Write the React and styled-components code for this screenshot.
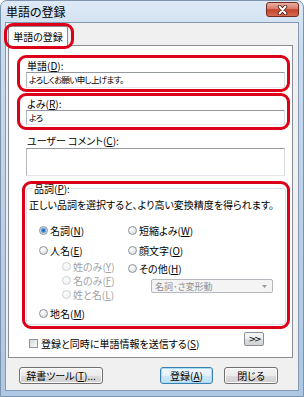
import styled, { createGlobalStyle } from "styled-components";

const GlobalStyle = createGlobalStyle`
  html, body { margin: 0; padding: 0; background: #fff; }
  body {
    font-family: "Noto Sans CJK JP", "Noto Sans", sans-serif;
    font-feature-settings: "palt";
    color: #000;
  }
  * { box-sizing: border-box; }
`;

const Window = styled.div`
  width: 304px;
  height: 397px;
  border: 1px solid #7d93ad;
  border-radius: 7px 7px 0 0;
  background: linear-gradient(180deg, #dde9f5 0%, #c9dbee 12%, #b9cfe7 60%, #aec7e2 100%);
  display: flex;
  flex-direction: column;
  overflow: hidden;
`;

const TitleBar = styled.div`
  height: 21px;
  display: flex;
  justify-content: space-between;
  align-items: flex-start;
  padding: 0 4px 0 5px;
`;

const Title = styled.div`
  font-size: 12px;
  line-height: 22px;
`;

const CloseButton = styled.div`
  margin-top: 1px;
  width: 33px;
  height: 15px;
  border: 1px solid #6e2a21;
  border-radius: 3px;
  background: linear-gradient(180deg, #eab0a4 0%, #d77a68 45%, #c2432c 52%, #d86a50 100%);
  display: flex;
  align-items: center;
  justify-content: center;
`;

const Client = styled.div`
  flex: 1;
  margin: 0 4px 5px 4px;
  border: 1px solid #8398b2;
  background: #f0f0f0;
  display: flex;
  flex-direction: column;
`;

const TabStrip = styled.div`
  display: flex;
  padding: 3px 0 0 2px;
`;

// a section of the dialog; $inset draws the red annotation frame around it
const Section = styled.div`
  position: relative;
  z-index: ${(p) => p.$z || 0};
  margin: ${(p) => p.$margin || "0"};
  &::after {
    content: "";
    display: ${(p) => (p.$inset ? "block" : "none")};
    position: absolute;
    top: ${(p) => p.$inset?.[0]}px;
    right: ${(p) => p.$inset?.[1]}px;
    bottom: ${(p) => p.$inset?.[2]}px;
    left: ${(p) => p.$inset?.[3]}px;
    border: 3px solid #dc0018;
    border-radius: 9px;
    pointer-events: none;
  }
`;

const Tab = styled.div`
  height: 20px;
  width: 60px;
  margin-bottom: -1px;
  border: 1px solid #898c95;
  border-bottom: none;
  border-radius: 2px 2px 0 0;
  background: #fff;
  font-size: 10px;
  line-height: 19px;
  text-align: center;
`;

const Panel = styled.div`
  margin: 0 5px 0 2px;
  height: 313px;
  border: 1px solid #898c95;
  background: #fff;
  display: flex;
  flex-direction: column;
`;

const FieldLabel = styled.div`
  height: 13px;
  font-size: 10px;
  line-height: 13px;
  padding-left: 1px;
`;

const TextBox = styled.div`
  height: ${(p) => p.$h}px;
  margin-top: ${(p) => p.$mt || 0}px;
  border: 1px solid;
  border-color: #9499a0 #dadde2 #e3e7ec #b3b7bd;
  background: #fff;
  font-size: 8.5px;
  letter-spacing: -0.7px;
  line-height: 13px;
  padding: 0 2px;
`;

const Group = styled.fieldset`
  margin: 0;
  height: 143px;
  padding: 0 0 0 2px;
  border: 1px solid #d5dfe5;
  border-radius: 3px;
  min-width: 0;
`;

const Legend = styled.legend`
  margin-left: 4px;
  padding: 0 1px;
  font-size: 10px;
  line-height: 13px;
`;

const Description = styled.div`
  margin-top: 3px;
  height: 14px;
  font-size: 10px;
  line-height: 14px;
  white-space: nowrap;
`;

const Columns = styled.div`
  display: flex;
  margin-top: 11px;
  padding-left: 10px;
`;

const Column = styled.div`
  width: ${(p) => p.$w || "auto"};
  display: flex;
  flex-direction: column;
`;

const RadioItem = styled.div`
  display: flex;
  align-items: center;
  gap: 2px;
  height: 14px;
  margin-top: ${(p) => p.$mt || 0}px;
  padding-left: ${(p) => p.$indent || 0}px;
  font-size: 10px;
  color: ${(p) => (p.$disabled ? "#a3a3a3" : "#000")};
  white-space: nowrap;
`;

const RadioDot = styled.span`
  width: 9px;
  height: 9px;
  flex-shrink: 0;
  border-radius: 50%;
  border: 1px solid ${(p) => (p.$disabled ? "#cdd1d5" : "#8c949c")};
  background: ${(p) =>
    p.$checked
      ? "radial-gradient(circle, #1d5ba6 0, #3a86d8 1.5px, #8ab8e8 2.5px, #edf2f7 3.5px)"
      : p.$disabled
      ? "radial-gradient(circle at 35% 30%, #fdfdfd 0, #f1f2f3 70%)"
      : "radial-gradient(circle at 35% 30%, #ffffff 0, #e4e7ea 60%, #ced3d8 100%)"};
`;

const Combo = styled.div`
  margin: 4px 0 0 23px;
  width: 122px;
  height: 14px;
  border: 1px solid #b5b9be;
  border-radius: 2px;
  background: #f4f4f4;
  color: #8e8e8e;
  font-size: 9px;
  display: flex;
  align-items: center;
  justify-content: space-between;
  padding: 0 5px 0 3px;
`;

const OptionRow = styled.div`
  display: flex;
  justify-content: space-between;
  align-items: flex-start;
  margin: 7px 28px 0 20px;
`;

const CheckLabel = styled.div`
  margin-top: 4px;
  height: 14px;
  display: flex;
  align-items: center;
  gap: 3px;
  font-size: 10px;
`;

const CheckBox = styled.span`
  width: 9px;
  height: 9px;
  border: 1px solid #8e949a;
  background: linear-gradient(135deg, #d6d9dc 0%, #f7f8f9 100%);
`;

const MoreButton = styled.div`
  width: 20px;
  height: 14px;
  border: 1px solid #8a9099;
  border-radius: 2px;
  background: linear-gradient(180deg, #f7f7f7 0%, #ececec 50%, #dedede 51%, #d3d3d3 100%);
  font-size: 9px;
  line-height: 12px;
  letter-spacing: -2px;
  text-align: center;
  font-family: "DejaVu Sans", sans-serif;
`;

const ButtonRow = styled.div`
  display: flex;
  gap: 11px;
  padding: 9px 20px 0 13px;
`;

const Button = styled.div`
  width: ${(p) => p.$w}px;
  height: 17px;
  margin-left: ${(p) => (p.$push ? "auto" : "0")};
  border: 1px solid ${(p) => (p.$default ? "#3c7fb1" : "#707070")};
  border-radius: 3px;
  background: ${(p) =>
    p.$default
      ? "linear-gradient(180deg, #f1f8fd 0%, #e3f1fb 50%, #cde8f8 51%, #bfe0f5 100%)"
      : "linear-gradient(180deg, #f3f3f3 0%, #ebebeb 50%, #dddddd 51%, #cfcfcf 100%)"};
  box-shadow: inset 0 0 0 1px ${(p) => (p.$default ? "#a6dcf7" : "#fbfbfb")};
  font-size: 10px;
  line-height: 15px;
  text-align: center;
  white-space: nowrap;
`;

const Radio = ({ label, checked, disabled, mt, indent }) => (
  <RadioItem $mt={mt} $indent={indent} $disabled={disabled}>
    <RadioDot $checked={checked} $disabled={disabled} />
    <span>{label}</span>
  </RadioItem>
);

export default function App() {
  return (
    <>
      <GlobalStyle />
      <Window>
        <TitleBar>
          <Title>単語の登録</Title>
          <CloseButton>
            <svg width="13" height="10" viewBox="0 0 13 10">
              <path d="M3.5 1.5 L9.5 8.5 M9.5 1.5 L3.5 8.5" stroke="#4a1810" strokeWidth="3.6" strokeLinecap="round" />
              <path d="M3.5 1.5 L9.5 8.5 M9.5 1.5 L3.5 8.5" stroke="#ffffff" strokeWidth="2" strokeLinecap="round" />
            </svg>
          </CloseButton>
        </TitleBar>
        <Client>
          <TabStrip>
            <Section $inset={[-3, -6, -4, -4]} $z={2}>
              <Tab>単語の登録</Tab>
            </Section>
          </TabStrip>
          <Panel>
            <Section $margin="13px 7px 0 17px" $inset={[-4, -5, -4, -9]}>
              <FieldLabel>
                単語(<u>D</u>):
              </FieldLabel>
              <TextBox $h={16}>よろしくお願い申し上げます。</TextBox>
            </Section>
            <Section $margin="9px 7px 0 17px" $inset={[-4, -5, -5, -9]}>
              <FieldLabel>
                よみ(<u>R</u>):
              </FieldLabel>
              <TextBox $h={15}>よろ</TextBox>
            </Section>
            <Section $margin="9px 7px 0 17px">
              <FieldLabel>
                ユーザー コメント(<u>C</u>):
              </FieldLabel>
              <TextBox $h={28} $mt={1} />
            </Section>
            <Section $margin="6px 6px 0 17px" $inset={[-1, -4, -4, -4]}>
              <Group>
                <Legend>
                  品詞(<u>P</u>):
                </Legend>
                <Description>正しい品詞を選択すると、より高い変換精度を得られます。</Description>
                <Columns>
                  <Column $w="89px">
                    <Radio label={<>名詞(<u>N</u>)</>} checked />
                    <Radio label={<>人名(<u>E</u>)</>} mt={6} />
                    <Radio label={<>姓のみ(<u>Y</u>)</>} mt={2} indent={23} disabled />
                    <Radio label={<>名のみ(<u>F</u>)</>} indent={23} disabled />
                    <Radio label={<>姓と名(<u>L</u>)</>} indent={23} disabled />
                    <Radio label={<>地名(<u>M</u>)</>} mt={5} />
                  </Column>
                  <Column>
                    <Radio label={<>短縮よみ(<u>W</u>)</>} />
                    <Radio label={<>顔文字(<u>O</u>)</>} mt={6} />
                    <Radio label={<>その他(<u>H</u>)</>} mt={4} />
                    <Combo>
                      <span>名詞･さ変形動</span>
                      <svg width="5" height="3" viewBox="0 0 5 3">
                        <path d="M0 0 H5 L2.5 3 Z" fill="#9a9a9a" />
                      </svg>
                    </Combo>
                  </Column>
                </Columns>
              </Group>
            </Section>
            <OptionRow>
              <CheckLabel>
                <CheckBox />
                <span>
                  登録と同時に単語情報を送信する(<u>S</u>)
                </span>
              </CheckLabel>
              <MoreButton>&gt;&gt;</MoreButton>
            </OptionRow>
          </Panel>
          <ButtonRow>
            <Button $w={84}>
              辞書ツール(<u>T</u>)...
            </Button>
            <Button $w={53} $push $default>
              登録(<u>A</u>)
            </Button>
            <Button $w={54}>閉じる</Button>
          </ButtonRow>
        </Client>
      </Window>
    </>
  );
}
